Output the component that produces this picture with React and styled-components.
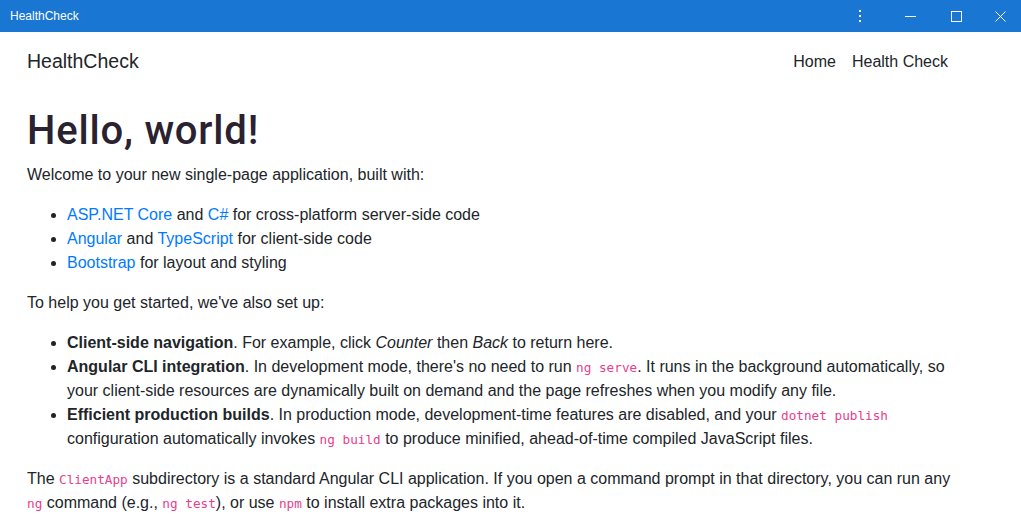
import React from "react";
import styled, { createGlobalStyle } from "styled-components";

const GlobalStyle = createGlobalStyle`
  html, body {
    margin: 0;
    padding: 0;
    background: #fff;
  }
  body {
    font-family: "Liberation Sans", Arial, sans-serif;
    font-size: 16px;
    line-height: 1.5;
    color: #212529;
  }
  * {
    box-sizing: border-box;
  }
`;

const Window = styled.div`
  width: 1021px;
  height: 532px;
  overflow: hidden;
  display: flex;
  flex-direction: column;
`;

const TitleBar = styled.div`
  height: 32px;
  flex-shrink: 0;
  background: #1976d2;
  color: #fff;
  display: flex;
  align-items: center;
  padding-left: 10px;
  font-size: 12px;
`;

const TitleText = styled.span`
  flex: 1;
`;

const TitleButton = styled.div`
  width: ${(p) => p.w || 46}px;
  height: 32px;
  display: flex;
  align-items: center;
  justify-content: center;
`;

const Navbar = styled.nav`
  height: 60px;
  flex-shrink: 0;
  display: flex;
  align-items: center;
  justify-content: space-between;
  padding: 0 65px 0 27px;
`;

const Brand = styled.a`
  font-size: 19.5px;
  color: #212529;
  text-decoration: none;
`;

const NavLinks = styled.div`
  display: flex;
`;

const NavLink = styled.a`
  padding: 0 8px;
  color: #212529;
  text-decoration: none;
`;

const Main = styled.main`
  padding: 15px 65px 0 27px;
`;

const Heading = styled.h1`
  margin: 0 0 8px;
  font-family: Roboto, "Liberation Sans", sans-serif;
  font-size: 40px;
  font-weight: 500;
  letter-spacing: 0.8px;
  line-height: 1.2;
  color: #2a2230;
`;

const Para = styled.p`
  margin: 0 0 16px;
`;

const List = styled.ul`
  margin: 0 0 16px;
  padding-left: 40px;
`;

const Link = styled.a`
  color: #007bff;
  text-decoration: none;
`;

const Code = styled.code`
  font-family: "DejaVu Sans Mono", "Liberation Mono", monospace;
  font-size: 12.7px;
  color: #e83e8c;
`;

const App = () => (
  <Window>
    <GlobalStyle />
    <TitleBar>
      <TitleText>HealthCheck</TitleText>
      <TitleButton w={54}>
        <svg width="2" height="12" viewBox="0 0 2 12">
          <rect x="0" y="0" width="2" height="2" fill="#fff" />
          <rect x="0" y="5" width="2" height="2" fill="#fff" />
          <rect x="0" y="10" width="2" height="2" fill="#fff" />
        </svg>
      </TitleButton>
      <TitleButton>
        <svg width="11" height="11" viewBox="0 0 11 11">
          <line x1="0" y1="5.5" x2="11" y2="5.5" stroke="#fff" strokeWidth="1" />
        </svg>
      </TitleButton>
      <TitleButton>
        <svg width="11" height="11" viewBox="0 0 11 11">
          <rect x="0.5" y="0.5" width="10" height="10" fill="none" stroke="#fff" strokeWidth="1" />
        </svg>
      </TitleButton>
      <TitleButton w={42}>
        <svg width="11" height="11" viewBox="0 0 11 11">
          <path d="M0.5 0.5 L10.5 10.5 M10.5 0.5 L0.5 10.5" stroke="#fff" strokeWidth="1" />
        </svg>
      </TitleButton>
    </TitleBar>
    <Navbar>
      <Brand href="#">HealthCheck</Brand>
      <NavLinks>
        <NavLink href="#">Home</NavLink>
        <NavLink href="#">Health Check</NavLink>
      </NavLinks>
    </Navbar>
    <Main>
      <Heading>Hello, world!</Heading>
      <Para>Welcome to your new single-page application, built with:</Para>
      <List>
        <li>
          <Link href="#">ASP.NET Core</Link> and <Link href="#">C#</Link> for cross-platform server-side code
        </li>
        <li>
          <Link href="#">Angular</Link> and <Link href="#">TypeScript</Link> for client-side code
        </li>
        <li>
          <Link href="#">Bootstrap</Link> for layout and styling
        </li>
      </List>
      <Para>To help you get started, we've also set up:</Para>
      <List>
        <li>
          <strong>Client-side navigation</strong>. For example, click <em>Counter</em> then <em>Back</em> to return here.
        </li>
        <li>
          <strong>Angular CLI integration</strong>. In development mode, there's no need to run <Code>ng serve</Code>. It runs in the background automatically, so your client-side resources are dynamically built on demand and the page refreshes when you modify any file.
        </li>
        <li>
          <strong>Efficient production builds</strong>. In production mode, development-time features are disabled, and your <Code>dotnet publish</Code> configuration automatically invokes <Code>ng build</Code> to produce minified, ahead-of-time compiled JavaScript files.
        </li>
      </List>
      <Para>
        The <Code>ClientApp</Code> subdirectory is a standard Angular CLI application. If you open a command prompt in that directory, you can run any <Code>ng</Code> command (e.g., <Code>ng test</Code>), or use <Code>npm</Code> to install extra packages into it.
      </Para>
    </Main>
  </Window>
);

export default App;
